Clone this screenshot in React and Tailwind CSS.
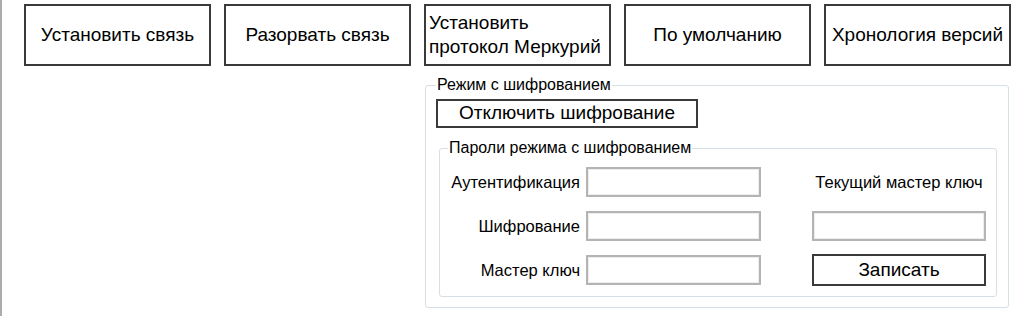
import React from "react";

const TopButton = ({ children, className = "" }) => {
  return (
    <button
      className={
        "w-[187px] h-[62px] border-2 border-[#3a3a3a] bg-white text-[19px] text-black flex items-center " +
        className
      }
    >
      {children}
    </button>
  );
};

const Field = ({ label }) => {
  return (
    <div className="flex items-center h-[30px]">
      <div className="w-[132px] text-right text-[16.5px] pr-0">{label}</div>
      <input
        className="ml-[6px] w-[175px] h-[30px] border-2 border-[#b4b4b4] shadow-[inset_0_0_0_1px_#ececec] bg-white outline-none"
        type="text"
      />
    </div>
  );
};

export default function App() {
  return (
    <div
      className="w-[1023px] h-[316px] bg-white border-l-2 border-[#acacac] text-black"
      style={{ fontFamily: '"Liberation Sans", Arial, sans-serif' }}
    >
      <div className="flex gap-[13px] pl-[22px] pt-[4px]">
        <TopButton className="justify-center">Установить связь</TopButton>
        <TopButton className="justify-center">Разорвать связь</TopButton>
        <TopButton className="justify-start text-left pl-[3px] leading-[24px]">
          Установить
          <br />
          протокол Меркурий
        </TopButton>
        <TopButton className="justify-center">По умолчанию</TopButton>
        <TopButton className="justify-center">Хронология версий</TopButton>
      </div>

      <fieldset className="ml-[423px] mt-[10px] w-[584px] border border-[#d6dee6] rounded-[3px] pl-[10px] pr-[11px] pb-[10px] pt-[5px]">
        <legend className="px-[1px] text-[16px] leading-[18px]">
          Режим с шифрованием
        </legend>
        <button className="w-[262px] h-[29px] border-2 border-[#3a3a3a] bg-white text-[19px] flex items-center justify-center">
          Отключить шифрование
        </button>

        <fieldset className="ml-[3px] mt-[11px] border border-[#d6dee6] rounded-[3px] pl-[8px] pr-[10px] pt-[10px] pb-[10px]">
          <legend className="px-[1px] text-[16px] leading-[18px]">
            Пароли режима с шифрованием
          </legend>
          <div className="flex">
            <div className="flex flex-col gap-[14px]">
              <Field label="Аутентификация" />
              <Field label="Шифрование" />
              <Field label="Мастер ключ" />
            </div>
            <div className="ml-[51px] w-[174px] flex flex-col gap-[14px]">
              <div className="h-[30px] flex items-center justify-center text-[16.5px]">
                Текущий мастер ключ
              </div>
              <input
                className="w-[174px] h-[30px] border-2 border-[#b4b4b4] shadow-[inset_0_0_0_1px_#ececec] bg-white outline-none"
                type="text"
              />
              <button className="w-[174px] h-[32px] -mt-[1px] border-2 border-[#3a3a3a] bg-white text-[19px] flex items-center justify-center">
                Записать
              </button>
            </div>
          </div>
        </fieldset>
      </fieldset>
    </div>
  );
}
